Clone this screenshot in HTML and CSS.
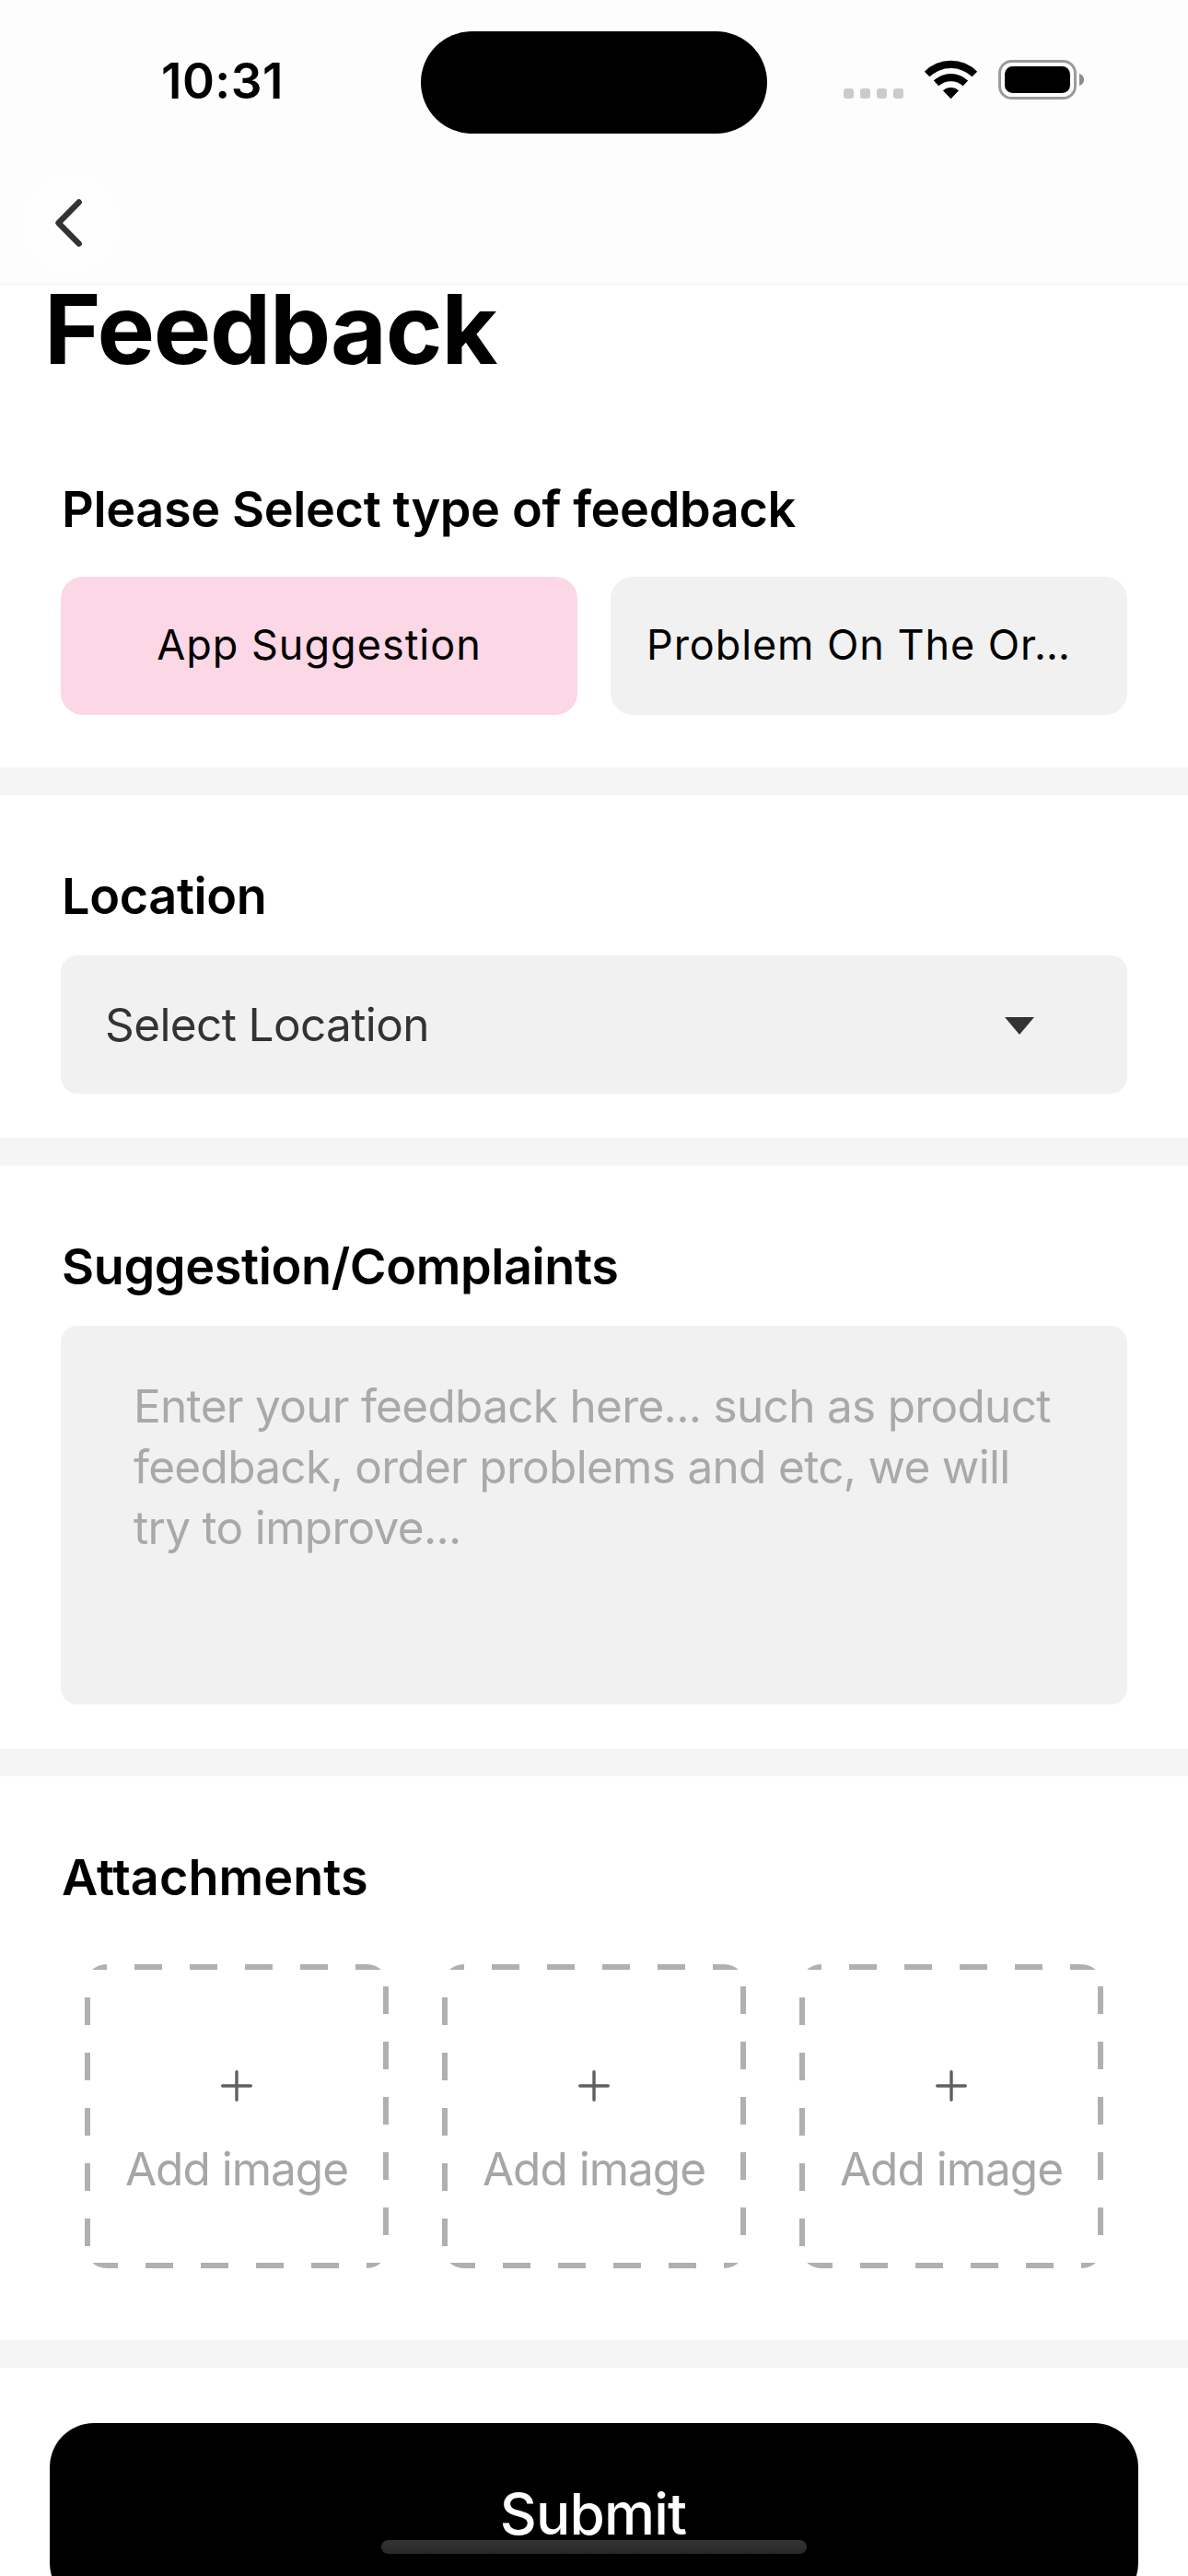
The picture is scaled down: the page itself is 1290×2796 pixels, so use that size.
FILE: index.html
```html
<!DOCTYPE html>
<html lang="en">
<head>
<meta charset="utf-8">
<title>Feedback</title>
<link rel="stylesheet" href="styles.css">
</head>
<body>
<svg width="0" height="0" class="defs" aria-hidden="true">
  <symbol id="dashed-frame" viewBox="0 0 330 330">
    <clipPath id="frame-clip"><rect width="330" height="330" rx="24"/></clipPath>
    <path d="M0 0H330V330H0Z" fill="none" stroke="#b0b0b0" stroke-width="12" stroke-dasharray="30" stroke-dashoffset="6" clip-path="url(#frame-clip)"/>
  </symbol>
  <symbol id="plus" viewBox="0 0 34 34">
    <path d="M17 1.7V32.3M1.7 17H32.3" fill="none" stroke="#606060" stroke-width="3.4" stroke-linecap="round"/>
  </symbol>
</svg>
<div class="screen">
  <header class="header">
    <div class="status-bar">
      <span class="time">10:31</span>
      <span class="island"></span>
      <svg class="status-icons" viewBox="833 0 457 177" aria-hidden="true">
        <g fill="#cbcbcb">
          <rect x="916" y="96" width="11" height="11" rx="3.2"/>
          <rect x="934" y="96" width="11" height="11" rx="3.2"/>
          <rect x="952" y="96" width="11" height="11" rx="3.2"/>
          <rect x="970" y="96" width="11" height="11" rx="3.2"/>
        </g>
        <path d="M1003.9 77.7A40 40 0 0 1 1061.1 77.7L1055.6 83.3A33.6 33.6 0 0 0 1009.4 83.3Z"/>
        <path d="M1013.9 87.6A26.5 26.5 0 0 1 1051.1 87.6L1045.8 93.3A19.8 19.8 0 0 0 1019.2 93.3Z"/>
        <path d="M1023.9 98.3A12.6 12.6 0 0 1 1041.1 98.3L1032.5 107.2Z"/>
        <rect x="1085.5" y="66.5" width="82" height="40" rx="13" fill="none" stroke="#9b9b9b" stroke-width="3"/>
        <rect x="1091" y="72" width="71" height="29" rx="8.5"/>
        <path d="M1172 80C1174 80.5 1177 82.5 1177 86.5S1174 92.5 1172 93Z" fill="#8c8c8c"/>
      </svg>
    </div>
    <nav class="nav-bar">
      <button class="back" aria-label="Back">
        <svg viewBox="0 0 104 104" aria-hidden="true"><path d="M61.7 29.5L39.5 52L61.7 74.5" fill="none" stroke="#333" stroke-width="6.4" stroke-linecap="round" stroke-linejoin="round"/></svg>
      </button>
    </nav>
  </header>
  <main>
    <h1 class="title">Feedback</h1>
    <section class="section section-type">
      <h2 class="label">Please Select type of feedback</h2>
      <div class="types">
        <button class="type type-active"><span>App Suggestion</span></button>
        <button class="type"><span>Problem On The Or…</span></button>
      </div>
    </section>
    <section class="section">
      <h2 class="label">Location</h2>
      <div class="select">
        <span>Select Location</span>
        <svg class="caret" viewBox="0 0 32 19" aria-hidden="true"><path d="M0 0H32L16 19Z" fill="#333"/></svg>
      </div>
    </section>
    <section class="section">
      <h2 class="label">Suggestion/Complaints</h2>
      <div class="textarea">Enter your feedback here... such as product<br>feedback, order problems and etc, we will<br>try to improve...</div>
    </section>
    <section class="section section-files">
      <h2 class="label label-files">Attachments</h2>
      <div class="tiles">
        <div class="tile"><svg class="frame"><use href="#dashed-frame"/></svg><svg class="plus"><use href="#plus"/></svg><span>Add image</span></div>
        <div class="tile"><svg class="frame"><use href="#dashed-frame"/></svg><svg class="plus"><use href="#plus"/></svg><span>Add image</span></div>
        <div class="tile"><svg class="frame"><use href="#dashed-frame"/></svg><svg class="plus"><use href="#plus"/></svg><span>Add image</span></div>
      </div>
    </section>
    <div class="actions"><button class="submit">Submit</button></div>
  </main>
  <div class="home-indicator"></div>
</div>
</body>
</html>
```
FILE: styles.css
```css
* { box-sizing: border-box; margin: 0; padding: 0; }

body {
  background: #fff;
  color: #000;
  font-family: Inter, "Liberation Sans", sans-serif;
}

button { border: 0; font: inherit; color: inherit; }

.defs { position: absolute; }

.screen {
  position: relative;
  width: 1290px;
  height: 2796px;
  overflow: hidden;
  background: #fff;
}

.header {
  height: 309px;
  background: #fdfdfd;
  border-bottom: 1px solid #f2f2f2;
}

.status-bar {
  display: grid;
  grid-template-columns: 457px 376px 457px;
  align-items: center;
  height: 177px;
}

.time {
  padding: 0 0 2px 175px;
  font-size: 53px;
  font-weight: 600;
  line-height: 60px;
  letter-spacing: 0.5px;
}

.island { height: 111px; margin-top: 1px; border-radius: 56px; background: #000; }

.status-icons { display: block; width: 457px; height: 177px; }

.nav-bar { display: flex; align-items: center; height: 130px; padding-left: 24px; }

.back {
  width: 104px;
  height: 104px;
  border-radius: 50%;
  background: #fefefe;
}

.back svg { display: block; width: 104px; height: 104px; }

.title {
  padding-left: 48px;
  font-size: 105px;
  font-weight: 700;
  line-height: 96px;
  letter-spacing: -1.2px;
}

.section {
  padding: 80px 66px 48px;
  border-bottom: 30px solid #f5f5f5;
}

.section-type { padding-top: 118px; padding-bottom: 57px; }

.section-files { padding-bottom: 78px; }

.label {
  margin-bottom: 34px;
  padding-left: 1px;
  font-size: 54px;
  font-weight: 600;
  line-height: 60px;
  letter-spacing: -0.38px;
}

.section-type .label { margin-bottom: 43px; }

.label-files { margin-bottom: 64px; letter-spacing: 0.05px; }

.types { display: grid; grid-template-columns: 1fr 1fr; gap: 36px; }

.type {
  height: 150px;
  padding: 0 39px 2px;
  border-radius: 24px;
  background: #f1f1f1;
  font-size: 45px;
  line-height: 60px;
  letter-spacing: 0.92px;
  text-align: left;
  white-space: nowrap;
}

.type-active { background: #fcd7e5; text-align: center; letter-spacing: 1px; }

.select {
  display: flex;
  align-items: center;
  justify-content: space-between;
  height: 150px;
  padding: 0 101px 0 48px;
  border-radius: 18px;
  background: #f1f1f1;
  color: #333;
  font-size: 49.5px;
  letter-spacing: -0.62px;
}

.caret { display: block; width: 32px; height: 19px; margin-top: 2px; }

.textarea {
  height: 411px;
  padding: 54px 0 0 79px;
  border-radius: 18px;
  background: #f1f1f1;
  color: #a9a9a9;
  font-size: 49.5px;
  line-height: 66px;
  letter-spacing: -0.69px;
  white-space: nowrap;
}

.tiles { display: flex; justify-content: space-between; padding: 0 26px; }

.tile {
  position: relative;
  display: flex;
  flex-direction: column;
  align-items: center;
  width: 330px;
  height: 330px;
  padding-top: 115px;
  color: #a6a6a6;
  font-size: 49.5px;
  line-height: 60px;
  letter-spacing: -1px;
}

.frame { position: absolute; inset: 0; width: 330px; height: 330px; }

.plus { display: block; width: 34px; height: 34px; margin-bottom: 43px; }

.actions { padding: 60px 54px 0; }

.submit {
  display: block;
  width: 100%;
  height: 200px;
  padding: 0 2px 2px 0;
  border-radius: 48px;
  background: #000;
  color: #fff;
  font-size: 62px;
  line-height: 76px;
  letter-spacing: -0.8px;
  font-weight: 450;
}

.home-indicator {
  position: absolute;
  left: 414px;
  bottom: 24px;
  width: 462px;
  height: 15px;
  border-radius: 8px;
  background: linear-gradient(#343434, #282828);
}
```
